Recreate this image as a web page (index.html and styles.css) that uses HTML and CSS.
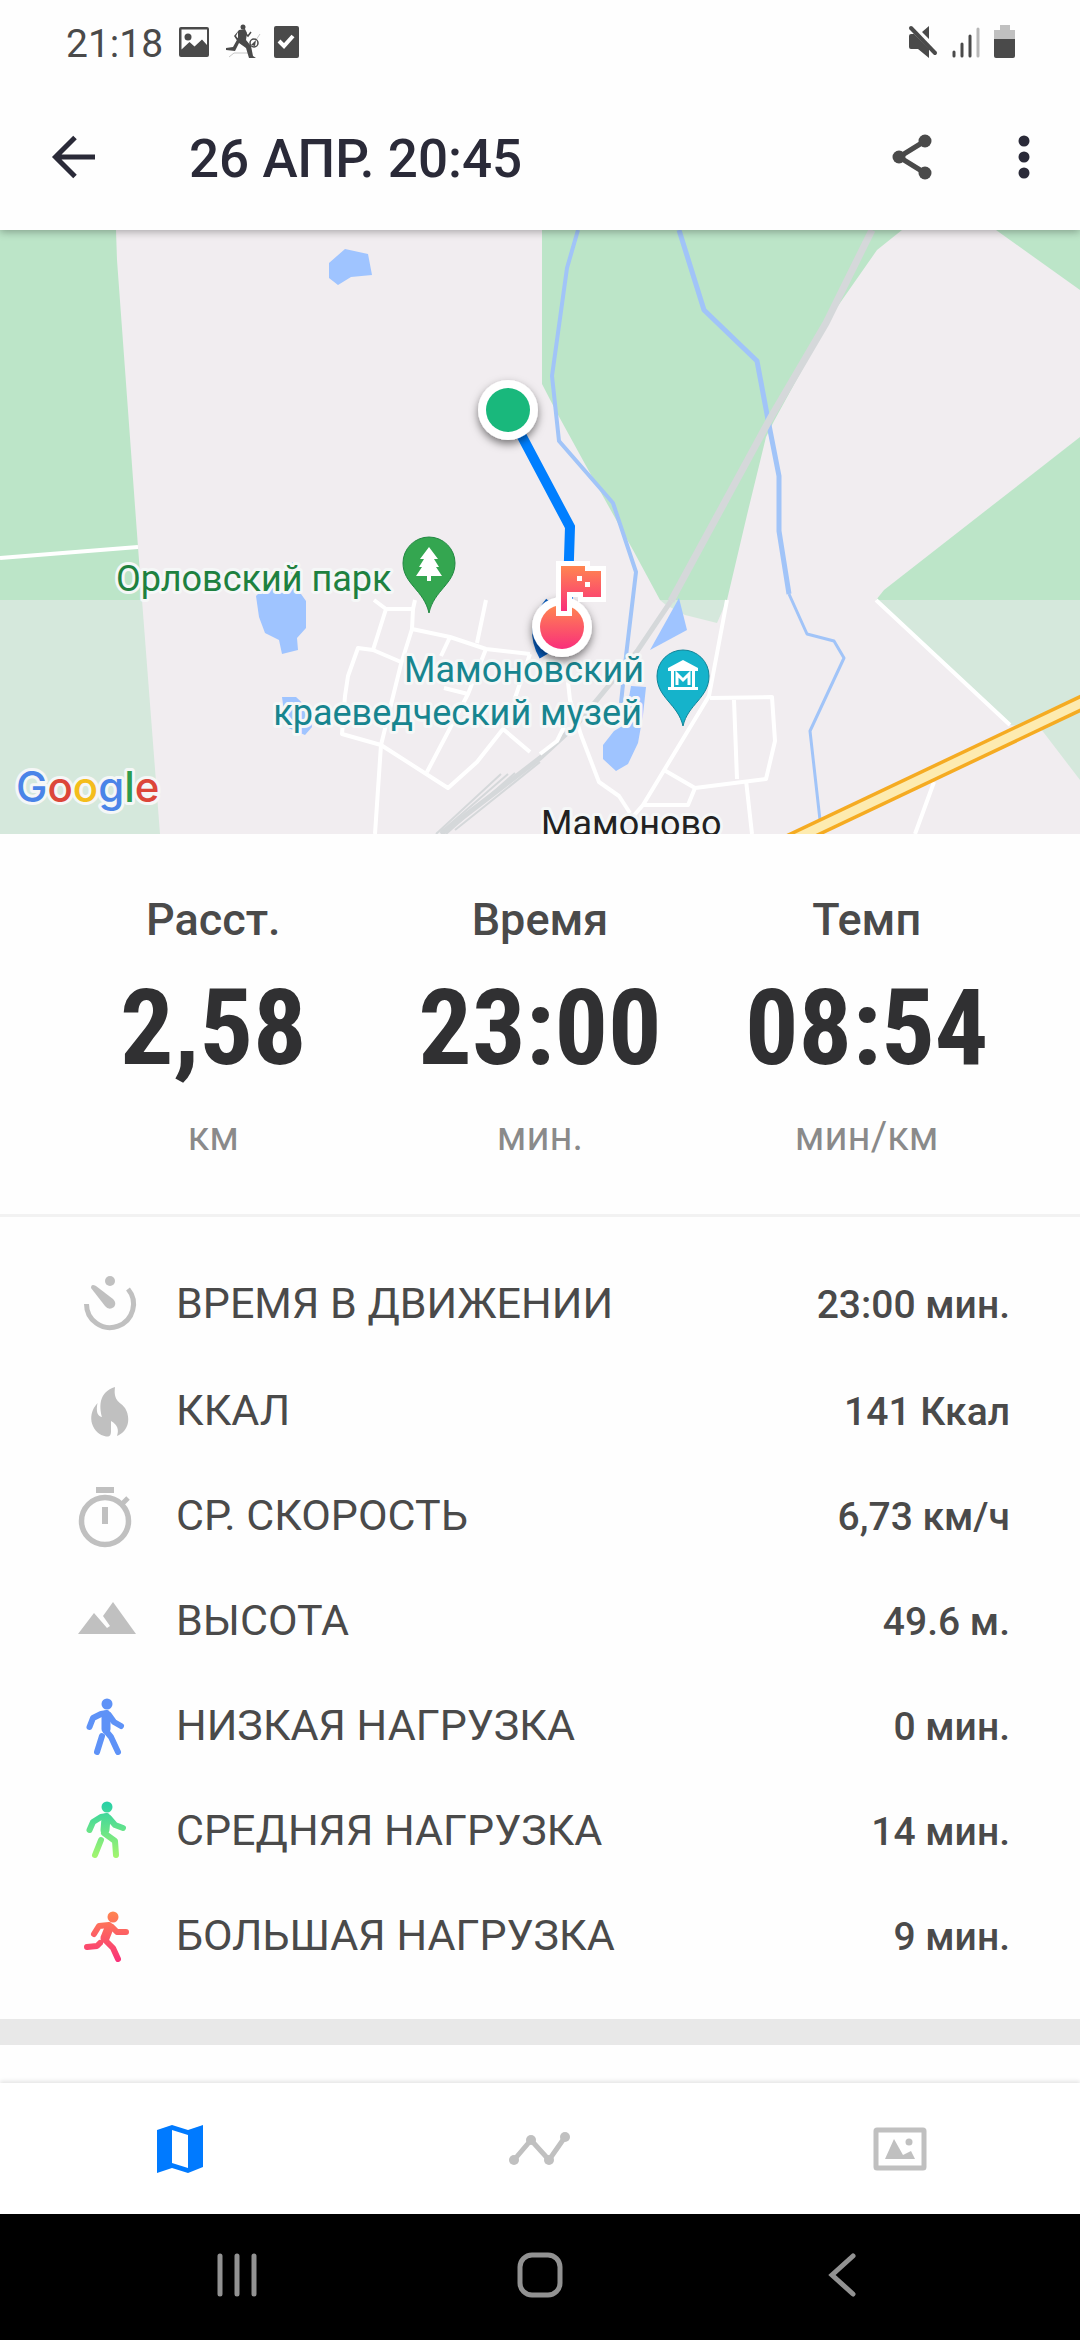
FILE: index.html
```html
<!DOCTYPE html>
<html lang="ru">
<head>
  <meta charset="UTF-8" />
  <meta name="viewport" content="width=device-width, initial-scale=1.0" />
  <title>Тренировка</title>
  <link rel="stylesheet" href="styles.css">
</head>
<body>
  <div class="status_bar">
    <span class="status_time">21:18</span>
    <svg class="icon" width="32" height="36" viewBox="0 0 32 36">
      <path fill-rule="evenodd" d="M3 3h26q2 0 2 2v26q0 2-2 2H3q-2 0-2-2V5q0-2 2-2zM3.500 5.500v20l8-7.500 5 4.500 7.500-7 5 5.500V5.500z"/>
      <circle cx="10" cy="13" r="3.500"/>
    </svg>
    <svg class="icon icon_run" width="36" height="38" viewBox="0 0 36 38">
      <circle cx="18" cy="4" r="2.500"/>
      <path d="M14 7l6-1 2 4-1 7 5 6 2 10 3 2h-7l-3-10-7-5-4 8-9-1v-2l7-1 5-9V9l-2 4 4 5-2 1-4-6z"/>
      <path class="line" d="M20 10l3 3 3-4" stroke-width="1.500"/>
      <circle class="line" cx="29" cy="20" r="4" stroke-width="1.500"/>
      <path d="M26 22l5-5-1 6z"/>
      <path class="line" d="M31 17l4-6M4 34l5-4h16" stroke-width="1" opacity="0.3"/>
    </svg>
    <svg class="icon" width="26" height="36" viewBox="0 0 26 36">
      <rect x="0" y="2" width="25" height="32" rx="2"/>
      <path d="M5 17l5 5 9-10" fill="none" stroke="#fff" stroke-width="4"/>
    </svg>
    <div class="status_right">
      <svg class="icon" width="30" height="36" viewBox="0 0 30 36">
        <path d="M1 12q0-2 2-2h3l15 15v9l-11-9H3q-2 0-2-2zM14 8l7-6v13z"/>
        <path class="line" d="M3 4l24 25" stroke-width="4" stroke-linecap="round"/>
      </svg>
      <svg class="icon" width="28" height="36" viewBox="0 0 28 36">
        <path class="line" d="M2 28v4M10 20v12M18 12v20" stroke-width="3" stroke-linecap="round"/>
        <path d="M26 5v27" stroke="#b8b8b8" stroke-width="3" stroke-linecap="round"/>
      </svg>
      <svg class="icon" width="22" height="36" viewBox="0 0 22 36">
        <path d="M6 1h10v5h5v11H0V6h6z" fill="#c0c0c0"/>
        <path d="M0 15h21v17q0 2-2 2H2q-2 0-2-2z"/>
      </svg>
    </div>
  </div>

  <header class="top_menu">
    <button class="icon_button" aria-label="Назад">
      <svg width="48" height="48" viewBox="0 0 48 48"><path d="M45 24H6M25 4.500L5.500 24 25 43.500" fill="none" stroke="#2a2a38" stroke-width="5"/></svg>
    </button>
    <h1 class="title">26 АПР. 20:45</h1>
    <button class="icon_button share" aria-label="Поделиться">
      <svg width="48" height="48" viewBox="0 0 48 48" fill="#4a4a4a">
        <path d="M37 8L11 24l26 16" fill="none" stroke="#4a4a4a" stroke-width="5"/>
        <circle cx="37" cy="8" r="6.500"/><circle cx="11" cy="24" r="6.500"/><circle cx="37" cy="40" r="6.500"/>
      </svg>
    </button>
    <button class="icon_button" aria-label="Меню">
      <svg width="48" height="48" viewBox="0 0 48 48" fill="#2a2a38"><circle cx="24" cy="8" r="5.500"/><circle cx="24" cy="24" r="5.500"/><circle cx="24" cy="40" r="5.500"/></svg>
    </button>
  </header>

  <main>
    <svg class="map" viewBox="0 0 1080 604" role="img" aria-label="Карта маршрута">
      <defs>
        <linearGradient id="finish" x1="0" y1="0" x2="0" y2="1">
          <stop offset="0" stop-color="#ff8650"/><stop offset="1" stop-color="#f92f7b"/>
        </linearGradient>
        <filter id="shadow" x="-50%" y="-50%" width="200%" height="200%">
          <feDropShadow dx="0" dy="4" stdDeviation="4" flood-opacity="0.5"/>
        </filter>
      </defs>
      <rect width="1080" height="604" fill="#f1edf0"/>

      <!-- леса -->
      <g fill="#bce5c8">
        <path d="M0 0H116L117 30 138 317 142 370H0z"/>
        <path d="M542 0V154L557 183 585 234 633 320 660 370H727L747 285 766 207 774 191 814 118 826 93 877 20 902 0z"/>
        <path d="M996 0H1080V60z"/>
        <path d="M1080 207V370H876L884 360z"/>
      </g>
      <g fill="#d5e8dc">
        <path d="M0 370H142L160 604H0z"/>
        <path d="M660 370H727L717 393 685 385 666 375z"/>
        <path d="M876 370H1080V550L1041 499 1010 495z"/>
      </g>

      <!-- вода -->
      <g fill="#9fc4ff">
        <path d="M329 33L345 19 368 24 372 45 351 47 338 55 329 48z"/>
        <path d="M282 340L293 332 301 364 306 371V398L297 408 298 420 282 424 279 410 265 403 259 387 256 366z"/>
        <path d="M282 467H296L310 480 312 497 305 505 286 497z"/>
        <path d="M679 368L687 400 650 420z"/>
        <path d="M631 456L646 457 643 485 638 513 628 534 616 541 603 529V515L614 501 624 495z"/>
      </g>
      <g fill="none" stroke="#a1c4f8" stroke-linejoin="round">
        <path d="M578 0L567 38 552 146 559 211 613 273 636 342 626 426 621 473" stroke-width="4"/>
        <path d="M679 0L704 80 757 131 769 195 779 246V301L789 364" stroke-width="5"/>
        <path d="M789 364L807 404 834 411 844 428 810 501 820 590" stroke-width="3"/>
      </g>

      <!-- железная дорога -->
      <g fill="none" stroke="#d5d8da">
        <path d="M872 0L826 93 771 187 671 371" stroke-width="7"/>
        <path d="M671 371L638 420 578 493 540 528 441 604" stroke-width="5"/>
        <path d="M501 544L436 604M515 543L446 604M540 532L455 600M508 544L441 602" stroke-width="2"/>
      </g>

      <!-- улицы -->
      <g fill="none" stroke="#fff" stroke-width="4" stroke-linejoin="round">
        <path d="M0 328L138 317M876 370L1010 495"/>
        <path d="M727 370L709 466 643 575 630 590M710 468L772 467 775 511 766 549 695 558 664 540M734 470L737 549M695 558L688 575H644M746 550L752 604M934 552L915 604"/>
        <path d="M568 452L570 470 581 505 599 552 619 566 630 583M540 524L557 511 564 497"/>
        <path d="M374 370L386 379H413L415 370M413 379L412 399 401 434 381 515 375 604M386 379L373 420M412 399L450 407 486 419 530 424M486 370L477 413M450 407L441 426"/>
        <path d="M401 432L373 420 358 418 348 446 345 466 342 504 381 515 448 558 477 532 503 499 530 522M486 419L468 464 427 542M444 458L468 464M530 424L515 468"/>
      </g>
      <path d="M784 614L1094 467" stroke="#f5ab22" stroke-width="16"/>
      <path d="M784 614L1094 467" stroke="#fdebb0" stroke-width="9"/>

      <!-- маршрут -->
      <path d="M550 372Q528 398 544 426" fill="none" stroke="#085cbd" stroke-width="10"/>
      <path d="M508 180L570 297 567 390" fill="none" stroke="#007fff" stroke-width="10"/>

      <!-- метки -->
      <path d="M429 383C424 360 403 354 403 333A26 26 0 0 1 455 333C455 354 434 360 429 383z" fill="#34a650" stroke="#228842"/>
      <path d="M429 317L438 329H434L439 337H436L442 346H431V351H427V346H416L422 337H419L424 329H420z" fill="#fff"/>
      <path d="M683 496C678 474 657 468 657 446A26 26 0 0 1 709 446C709 468 688 474 683 496z" fill="#15b3cb" stroke="#118498"/>
      <path d="M668 438L683 430 698 438V441H695V457H698V460H668V457H671V441H668zM674 441V457H692V441z" fill="#fff" fill-rule="evenodd"/>
      <path d="M677 455V444L683 450 689 444V455" fill="none" stroke="#fff" stroke-width="3"/>
      <g class="map_text">
        <text x="116" y="361" fill="#1e8140">Орловский парк</text>
        <text x="644" y="452" text-anchor="end" fill="#17858f">Мамоновский</text>
        <text x="642" y="495" text-anchor="end" fill="#17858f">краеведческий музей</text>
        <text x="541" y="606" fill="#222">Мамоново</text>
        <text class="google" x="16" y="572"><tspan fill="#4a84e8">G</tspan><tspan fill="#dc4639">o</tspan><tspan fill="#f4bd1c">o</tspan><tspan fill="#4a84e8">g</tspan><tspan fill="#2d9c4e">l</tspan><tspan fill="#dc4639">e</tspan></text>
      </g>

      <circle cx="508" cy="180" r="30" fill="#fff" filter="url(#shadow)"/>
      <circle cx="508" cy="180" r="22" fill="#19b87c"/>
      <circle cx="562" cy="397" r="30" fill="#fff" filter="url(#shadow)"/>
      <circle cx="562" cy="397" r="22" fill="url(#finish)"/>
      <path d="M561 336H585V341H601V367H583V362H567V381H561z" fill="#fff" stroke="#fff" stroke-width="10"/>
      <path d="M561 336H585V341H601V367H583V362H567V381H561z" fill="url(#finish)"/>
      <path d="M577 346h5v5h-5zM585 352h5v5h-5z" fill="#fff"/>
    </svg>

    <section class="stats">
      <div class="stat">
        <div class="stat_name">Расст.</div>
        <div class="stat_value">2,58</div>
        <div class="stat_unit">км</div>
      </div>
      <div class="stat">
        <div class="stat_name">Время</div>
        <div class="stat_value">23:00</div>
        <div class="stat_unit">мин.</div>
      </div>
      <div class="stat">
        <div class="stat_name">Темп</div>
        <div class="stat_value">08:54</div>
        <div class="stat_unit">мин/км</div>
      </div>
    </section>

    <dl class="details">
      <div class="row">
        <svg class="row_icon" viewBox="0 0 60 60">
          <circle cx="35" cy="8" r="5"/>
          <path d="M16 15Q16 10 21 13L38 26Q42 30 39 34 34 38 30 33z"/>
          <path d="M11.500 31A23.500 23.500 0 1 0 53 16" fill="none" stroke="#c0c0c0" stroke-width="5"/>
        </svg>
        <dt>ВРЕМЯ В ДВИЖЕНИИ</dt><dd>23:00 мин.</dd>
      </div>
      <div class="row">
        <svg class="row_icon" viewBox="0 0 60 60"><path d="M40 7C24 12 24 26 27 37 22 36 21 31 22.500 23 10 37 18 54 31 56.500 35 57 36 55 36 51V41C43 45 44 50 42 56 54 51 56 38 50 28 46 22 38 22 40 7z"/></svg>
        <dt>ККАЛ</dt><dd>141 Ккал</dd>
      </div>
      <div class="row">
        <svg class="row_icon" viewBox="0 0 60 60">
          <path d="M21 2H39V8H21zM27 22H33V39H27z"/>
          <g fill="none" stroke="#c0c0c0"><circle cx="30" cy="36" r="23.500" stroke-width="5.500"/><path d="M47 19L53 13" stroke-width="5"/></g>
        </svg>
        <dt>СР. СКОРОСТЬ</dt><dd>6,73 км/ч</dd>
      </div>
      <div class="row">
        <svg class="row_icon" viewBox="0 0 60 60"><path d="M3 44L19 23 32 38 35 36 28 26 38 12 61 44z"/></svg>
        <dt>ВЫСОТА</dt><dd>49.6 м.</dd>
      </div>
      <div class="row">
        <svg class="row_icon" viewBox="0 0 60 60">
          <g fill="none" stroke="#5e92f7" stroke-linecap="round" stroke-linejoin="round">
            <path d="M31 20V34" stroke-width="9"/>
            <path d="M32 18L26 19 18 23 14.500 32M34 20L39 27 46 31M31 36L36 42 43 57M27 41L22 57" stroke-width="6"/>
          </g>
          <circle cx="32" cy="9" r="5.500" fill="#5e92f7"/>
        </svg>
        <dt>НИЗКАЯ НАГРУЗКА</dt><dd>0 мин.</dd>
      </div>
      <div class="row">
        <svg class="row_icon" viewBox="0 0 60 60">
          <defs><linearGradient id="medium" gradientUnits="userSpaceOnUse" x1="0" y1="4" x2="0" y2="58"><stop offset="0" stop-color="#2bd1a5"/><stop offset="1" stop-color="#a5f66d"/></linearGradient></defs>
          <g fill="none" stroke="url(#medium)" stroke-linecap="round" stroke-linejoin="round">
            <path d="M31 18L30 30" stroke-width="9"/>
            <path d="M32 16L26 17 18 22 14.500 30M34 18L40 25 48 28M29 33L40 41 41 55M26 40L20 55" stroke-width="6"/>
          </g>
          <circle cx="32" cy="7" r="5.500" fill="url(#medium)"/>
        </svg>
        <dt>СРЕДНЯЯ НАГРУЗКА</dt><dd>14 мин.</dd>
      </div>
      <div class="row">
        <svg class="row_icon" viewBox="0 0 60 60">
          <defs><linearGradient id="high" gradientUnits="userSpaceOnUse" x1="0" y1="6" x2="0" y2="58"><stop offset="0" stop-color="#ff8650"/><stop offset="1" stop-color="#f92f7b"/></linearGradient></defs>
          <g fill="none" stroke="url(#high)" stroke-linecap="round" stroke-linejoin="round">
            <path d="M34 23L30 33" stroke-width="9"/>
            <path d="M34 20L24 21 19 29M37 22L42 27 51 27M29 34L38 43 43 54M25 38L22 41 12 42" stroke-width="6"/>
          </g>
          <circle cx="38" cy="12" r="5.500" fill="url(#high)"/>
        </svg>
        <dt>БОЛЬШАЯ НАГРУЗКА</dt><dd>9 мин.</dd>
      </div>
    </dl>
    <div class="separator"></div>
  </main>

  <nav class="tabs">
    <button class="tab" aria-label="Карта">
      <svg width="64" height="64" viewBox="0 0 64 64" fill="#007aff"><path fill-rule="evenodd" d="M9 13L24 8 40 13 55 8V50L40 56 24 51 9 56zM24 13V46L40 51V18z"/></svg>
    </button>
    <button class="tab" aria-label="График">
      <svg width="64" height="64" viewBox="0 0 64 64" fill="#c0c0c0"><path d="M6 43L23 23 41 43 57 20" fill="none" stroke="#c0c0c0" stroke-width="5"/><circle cx="6" cy="43" r="5"/><circle cx="23" cy="23" r="5"/><circle cx="41" cy="43" r="5"/><circle cx="57" cy="20" r="5"/></svg>
    </button>
    <button class="tab" aria-label="Фото">
      <svg width="64" height="64" viewBox="0 0 64 64" fill="#c0c0c0"><rect x="8" y="13" width="48" height="38" rx="1" fill="none" stroke="#c0c0c0" stroke-width="5"/><path d="M17 42L26 22 35 38 43 34 47 42z"/><circle cx="41" cy="25" r="3.500"/></svg>
    </button>
  </nav>

  <div class="system_bar">
    <button class="tab" aria-label="Недавние">
      <svg width="50" height="50" viewBox="0 0 50 50"><path d="M8 4V42M25 4V42M42 4V42"/></svg>
    </button>
    <button class="tab" aria-label="Домой">
      <svg width="50" height="50" viewBox="0 0 50 50"><rect x="5" y="3" width="40" height="40" rx="12"/></svg>
    </button>
    <button class="tab" aria-label="Назад">
      <svg width="50" height="50" viewBox="0 0 50 50"><path d="M35 4L14 23 35 42"/></svg>
    </button>
  </div>
</body>
</html>
```
FILE: styles.css
```css
* {
  box-sizing: border-box;
}
body {
  margin: 0;
  min-height: 100vh;
  display: flex;
  flex-direction: column;
  background: #fefefe;
  color: #4a4a4a;
  font-family: Roboto, sans-serif;
}
button {
  padding: 0;
  border: none;
  background: none;
  cursor: pointer;
}
svg {
  display: block;
}

.status_bar {
  position: relative;
  z-index: 2;
  height: 84px;
  padding: 0 64px 0 66px;
  display: flex;
  align-items: center;
  gap: 15px;
  background: #fefefe;
}
.status_time {
  padding-top: 4px;
  font-size: 39px;
  line-height: 48px;
}
.icon {
  fill: #4a4a4a;
}
.icon .line {
  fill: none;
  stroke: #4a4a4a;
}
.icon_run {
  margin-right: -2px;
}
.status_right {
  margin-left: auto;
  display: flex;
  gap: 14px;
}

.top_menu {
  position: relative;
  z-index: 1;
  height: 146px;
  padding: 0 32px 0 50px;
  display: flex;
  align-items: center;
  background: #fefefe;
  box-shadow: 0 2px 8px rgba(0, 0, 0, 0.3);
}
.title {
  margin: 0 auto 0 91px;
  padding-top: 4px;
  font-size: 53px;
  line-height: 60px;
  font-weight: 500;
  color: #2a2a38;
}
.share {
  margin-right: 64px;
}

main {
  flex: 1;
}
.map {
  width: 100%;
  height: auto;
}
.map_text {
  font-size: 36px;
  stroke: #f5f7f7;
  stroke-width: 6px;
  stroke-linejoin: round;
  paint-order: stroke;
}
.google {
  font-family: Inter, sans-serif;
  font-size: 42px;
  font-weight: 500;
}

.stats {
  padding: 56px 50px 48px;
  display: grid;
  grid-template-columns: repeat(3, 1fr);
  text-align: center;
  border-bottom: 3px solid #f2f2f2;
}
.stat_name {
  font-size: 45px;
  line-height: 60px;
  font-weight: 500;
}
.stat_value {
  font-family: "Roboto Condensed", Roboto, sans-serif;
  font-size: 106px;
  line-height: 156px;
  font-weight: 700;
  color: #303032;
}
.stat_unit {
  padding-top: 2px;
  font-size: 40px;
  line-height: 58px;
  color: #8a8a8a;
}

.details {
  margin: 0;
  padding: 32px 70px 32px 75px;
}
.row {
  height: 105px;
  display: flex;
  align-items: center;
}
.row:first-child {
  height: 108px;
}
.row_icon {
  width: 60px;
  height: 60px;
  margin-right: 41px;
  overflow: visible;
  fill: #c0c0c0;
}
.row dt {
  font-size: 43px;
}
.row dd {
  margin: 0 0 0 auto;
  padding-top: 4px;
  font-size: 39px;
  font-weight: 500;
}
.separator {
  height: 26px;
  background: #e8e8e8;
}

.tabs {
  height: 131px;
  display: grid;
  grid-template-columns: repeat(3, 1fr);
  background: #fff;
  box-shadow: 0 -2px 4px rgba(0, 0, 0, 0.1);
}
.tab {
  display: flex;
  align-items: center;
  justify-content: center;
}
.system_bar {
  height: 126px;
  padding: 0 86px;
  display: grid;
  grid-template-columns: repeat(3, 1fr);
  background: #000;
}
.system_bar svg {
  fill: none;
  stroke: #929292;
  stroke-width: 5px;
  stroke-linecap: round;
}
```
